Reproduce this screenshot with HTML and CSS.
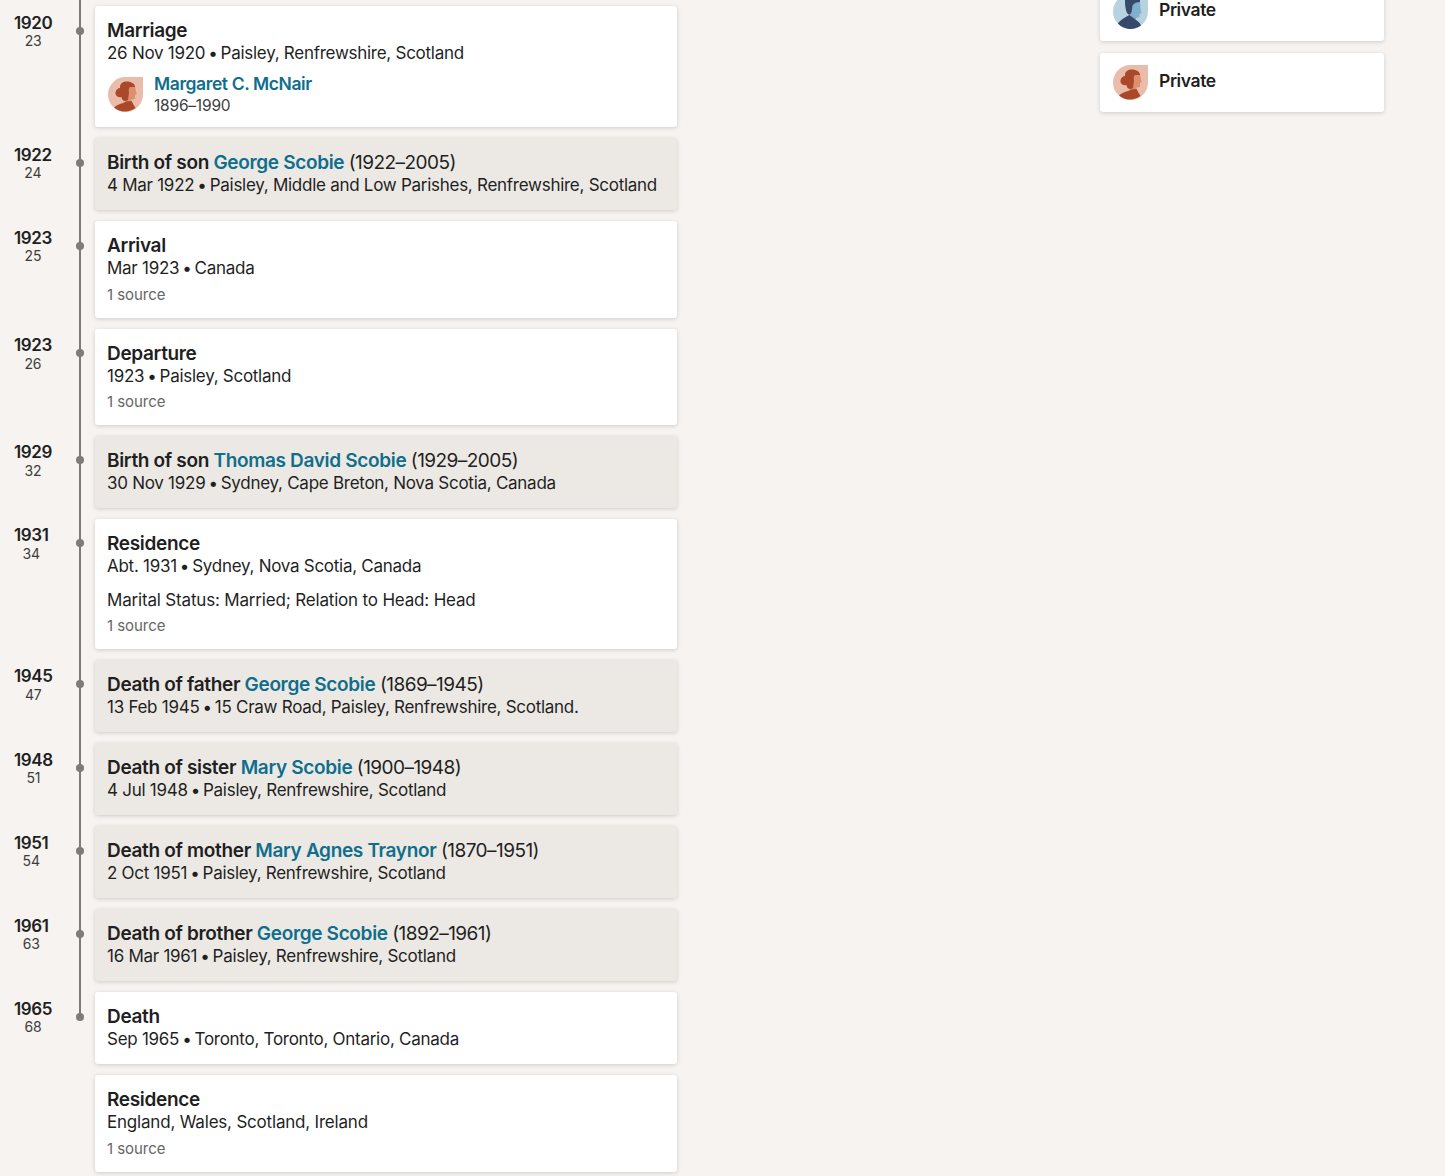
FILE: index.html
```html
<!DOCTYPE html>
<html lang="en">
<head>
<meta charset="utf-8">
<title>Life story</title>
<link rel="stylesheet" href="styles.css">
</head>
<body>
<svg class="defs" width="0" height="0" aria-hidden="true">
  <symbol id="female" viewBox="0 0 35 35">
    <path d="M17.5 35A17.5 17.5 0 0 1 17.5 0H35V17.5A17.5 17.5 0 0 1 17.5 35Z" fill="#eabcab"/>
    <path d="M20 8L27 8L27.800 14L28.800 17L27 18L27 22L23.500 22.500L23.500 26L17 26Z" fill="#dd8f70"/>
    <path d="M12 9C13 5 17 4 20 4.500C24 5 27 7 27 10L22 10C20.500 11 20.500 14 21 16L20 23C17 25 14 24 13.500 20C10 21 7 18.500 7.500 15.500C8 12.500 10 11 12 11Z" fill="#a9492a"/>
    <path d="M15 26L18 24.500L23.500 24C25 27 26.500 29 27.500 31A17.500 17.500 0 0 1 6 30.500C8 28 12 27 15 26Z" fill="#a9492a"/>
  </symbol>
  <symbol id="male" viewBox="0 0 35 35">
    <path d="M17.5 35A17.500 17.500 0 0 1 17.500 0H35V17.500A17.500 17.500 0 0 1 17.500 35Z" fill="#b9d2e0"/>
    <path d="M18 8L27 8L27.500 14L28.500 19L26.500 20L26.500 23L23 24L23 29L15 29Z" fill="#7fb0cc"/>
    <path d="M12 0L27 0L27 8C24 8 21 9 19.500 11.500L19 15C19 19 17 21 15.500 20.500C13 19 12 12 12 8Z" fill="#36496a"/>
    <path d="M16.500 21L23 26C25 27 27 29 28 31.500A17.500 17.500 0 0 1 4.800 29.500C7.500 26 12 23 16.500 21Z" fill="#36496a"/>
  </symbol>
</svg>
<div class="page">
  <main class="timeline">
    <div class="line"></div>

    <section class="row">
      <div class="when"><b>1920</b><span>23</span></div>
      <i class="dot"></i>
      <article class="card">
        <h3>Marriage</h3>
        <p>26 Nov 1920 <span class="sep">•</span> Paisley, Renfrewshire, Scotland</p>
        <div class="person">
          <svg class="avatar"><use href="#female"/></svg>
          <div class="person-text"><a href="#">Margaret C. McNair</a><span>1896–1990</span></div>
        </div>
      </article>
    </section>

    <section class="row">
      <div class="when"><b>1922</b><span>24</span></div>
      <i class="dot"></i>
      <article class="card family">
        <h3>Birth of son <a href="#">George Scobie</a> <span class="dates">(1922–2005)</span></h3>
        <p>4 Mar 1922 <span class="sep">•</span> Paisley, Middle and Low Parishes, Renfrewshire, Scotland</p>
      </article>
    </section>

    <section class="row">
      <div class="when"><b>1923</b><span>25</span></div>
      <i class="dot"></i>
      <article class="card">
        <h3>Arrival</h3>
        <p>Mar 1923 <span class="sep">•</span> Canada</p>
        <small>1 source</small>
      </article>
    </section>

    <section class="row">
      <div class="when"><b>1923</b><span>26</span></div>
      <i class="dot"></i>
      <article class="card">
        <h3>Departure</h3>
        <p>1923 <span class="sep">•</span> Paisley, Scotland</p>
        <small>1 source</small>
      </article>
    </section>

    <section class="row">
      <div class="when"><b>1929</b><span>32</span></div>
      <i class="dot"></i>
      <article class="card family">
        <h3>Birth of son <a href="#">Thomas David Scobie</a> <span class="dates">(1929–2005)</span></h3>
        <p>30 Nov 1929 <span class="sep">•</span> Sydney, Cape Breton, Nova Scotia, Canada</p>
      </article>
    </section>

    <section class="row">
      <div class="when"><b>1931</b><span>34</span></div>
      <i class="dot"></i>
      <article class="card">
        <h3>Residence</h3>
        <p>Abt. 1931 <span class="sep">•</span> Sydney, Nova Scotia, Canada</p>
        <p class="note">Marital Status: Married; Relation to Head: Head</p>
        <small>1 source</small>
      </article>
    </section>

    <section class="row">
      <div class="when"><b>1945</b><span>47</span></div>
      <i class="dot"></i>
      <article class="card family">
        <h3>Death of father <a href="#">George Scobie</a> <span class="dates">(1869–1945)</span></h3>
        <p>13 Feb 1945 <span class="sep">•</span> 15 Craw Road, Paisley, Renfrewshire, Scotland.</p>
      </article>
    </section>

    <section class="row">
      <div class="when"><b>1948</b><span>51</span></div>
      <i class="dot"></i>
      <article class="card family">
        <h3>Death of sister <a href="#">Mary Scobie</a> <span class="dates">(1900–1948)</span></h3>
        <p>4 Jul 1948 <span class="sep">•</span> Paisley, Renfrewshire, Scotland</p>
      </article>
    </section>

    <section class="row">
      <div class="when"><b>1951</b><span>54</span></div>
      <i class="dot"></i>
      <article class="card family">
        <h3>Death of mother <a href="#">Mary Agnes Traynor</a> <span class="dates">(1870–1951)</span></h3>
        <p>2 Oct 1951 <span class="sep">•</span> Paisley, Renfrewshire, Scotland</p>
      </article>
    </section>

    <section class="row">
      <div class="when"><b>1961</b><span>63</span></div>
      <i class="dot"></i>
      <article class="card family">
        <h3>Death of brother <a href="#">George Scobie</a> <span class="dates">(1892–1961)</span></h3>
        <p>16 Mar 1961 <span class="sep">•</span> Paisley, Renfrewshire, Scotland</p>
      </article>
    </section>

    <section class="row">
      <div class="when"><b>1965</b><span>68</span></div>
      <i class="dot"></i>
      <article class="card">
        <h3>Death</h3>
        <p>Sep 1965 <span class="sep">•</span> Toronto, Toronto, Ontario, Canada</p>
      </article>
    </section>

    <section class="row">
      <div class="when"></div>
      <article class="card">
        <h3>Residence</h3>
        <p class="loose">England, Wales, Scotland, Ireland</p>
        <small>1 source</small>
      </article>
    </section>
  </main>

  <aside class="family-list">
    <div class="member"><svg class="avatar"><use href="#male"/></svg><strong>Private</strong></div>
    <div class="member"><svg class="avatar"><use href="#female"/></svg><strong>Private</strong></div>
  </aside>
</div>
</body>
</html>
```

FILE: styles.css
```css
html, body {
  margin: 0;
  height: 1176px;
  overflow: hidden;
  background: #f6f3f0;
}
body {
  font-family: Inter, "Liberation Sans", sans-serif;
  color: #1f1f1f;
}
.defs { position: absolute; }
.page {
  display: flex;
  align-items: flex-start;
  padding-left: 14px;
}
.timeline {
  position: relative;
  width: 663px;
  padding-top: 6.300px;
  display: flex;
  flex-direction: column;
  gap: 11px;
}
.line {
  position: absolute;
  left: 65px;
  top: 0;
  height: 1016px;
  width: 2px;
  background: #7d7c79;
}
.row {
  position: relative;
  display: flex;
  align-items: flex-start;
}
.when {
  width: 81px;
  flex: none;
  display: grid;
  justify-content: start;
  justify-items: center;
  padding-top: 6.500px;
}
.when b {
  font-size: 17px;
  line-height: 20px;
  margin-bottom: -0.5px;
  font-weight: 600;
  letter-spacing: -0.4px;
}
.when span {
  font-size: 14px;
  line-height: 17px;
  color: #3d3d3d;
  letter-spacing: -0.2px;
}
.dot {
  position: absolute;
  left: 62px;
  top: 20.500px;
  width: 8px;
  height: 8px;
  border-radius: 50%;
  background: #7d7c79;
}
.card {
  flex: 1;
  padding: 12px 12px 13px;
  background: #fff;
  border-radius: 3px;
  box-shadow: 0 1px 4px rgba(0, 0, 0, .16);
}
.card.family { background: #ece9e4; }
h3 {
  margin: 1px 0 -1px;
  font-size: 19px;
  line-height: 24px;
  font-weight: 600;
  letter-spacing: -0.33px;
}
h3 a { letter-spacing: -0.33px; }
.dates {
  font-weight: 400;
  letter-spacing: -0.55px;
}
a {
  color: #0f6e8c;
  text-decoration: none;
}
p {
  margin: 0;
  font-size: 17px;
  line-height: 23.100px;
  letter-spacing: -0.27px;
}
.sep {
  margin: 0 -1.500px;
}
.note {
  margin: 11px 0 2px;
  letter-spacing: -0.18px;
}
.loose { letter-spacing: -0.2px; }
small {
  display: block;
  margin-top: 4px;
  font-size: 15px;
  line-height: 20px;
  letter-spacing: -0.05px;
  color: #666;
}
.person {
  display: flex;
  align-items: center;
  gap: 11px;
  margin: 7.500px 0 -1.500px;
}
.avatar {
  width: 35px;
  height: 35px;
  flex: none;
  margin-left: 1px;
}
.person-text {
  display: grid;
  gap: 1px;
  line-height: 21px;
}
.person-text a {
  font-size: 17.500px;
  font-weight: 600;
  letter-spacing: -0.4px;
}
.person-text span {
  font-size: 15.500px;
  color: #3d3d3d;
  letter-spacing: -0.2px;
}
.family-list {
  margin-left: 423px;
  margin-top: -18px;
  width: 284px;
  display: flex;
  flex-direction: column;
  gap: 12px;
}
.member {
  display: flex;
  align-items: center;
  gap: 11px;
  padding: 12px;
  background: #fff;
  border-radius: 3px;
  box-shadow: 0 1px 4px rgba(0, 0, 0, .16);
}
.member strong {
  font-size: 17.500px;
  font-weight: 600;
  letter-spacing: -0.4px;
  padding-bottom: 4px;
}
```
